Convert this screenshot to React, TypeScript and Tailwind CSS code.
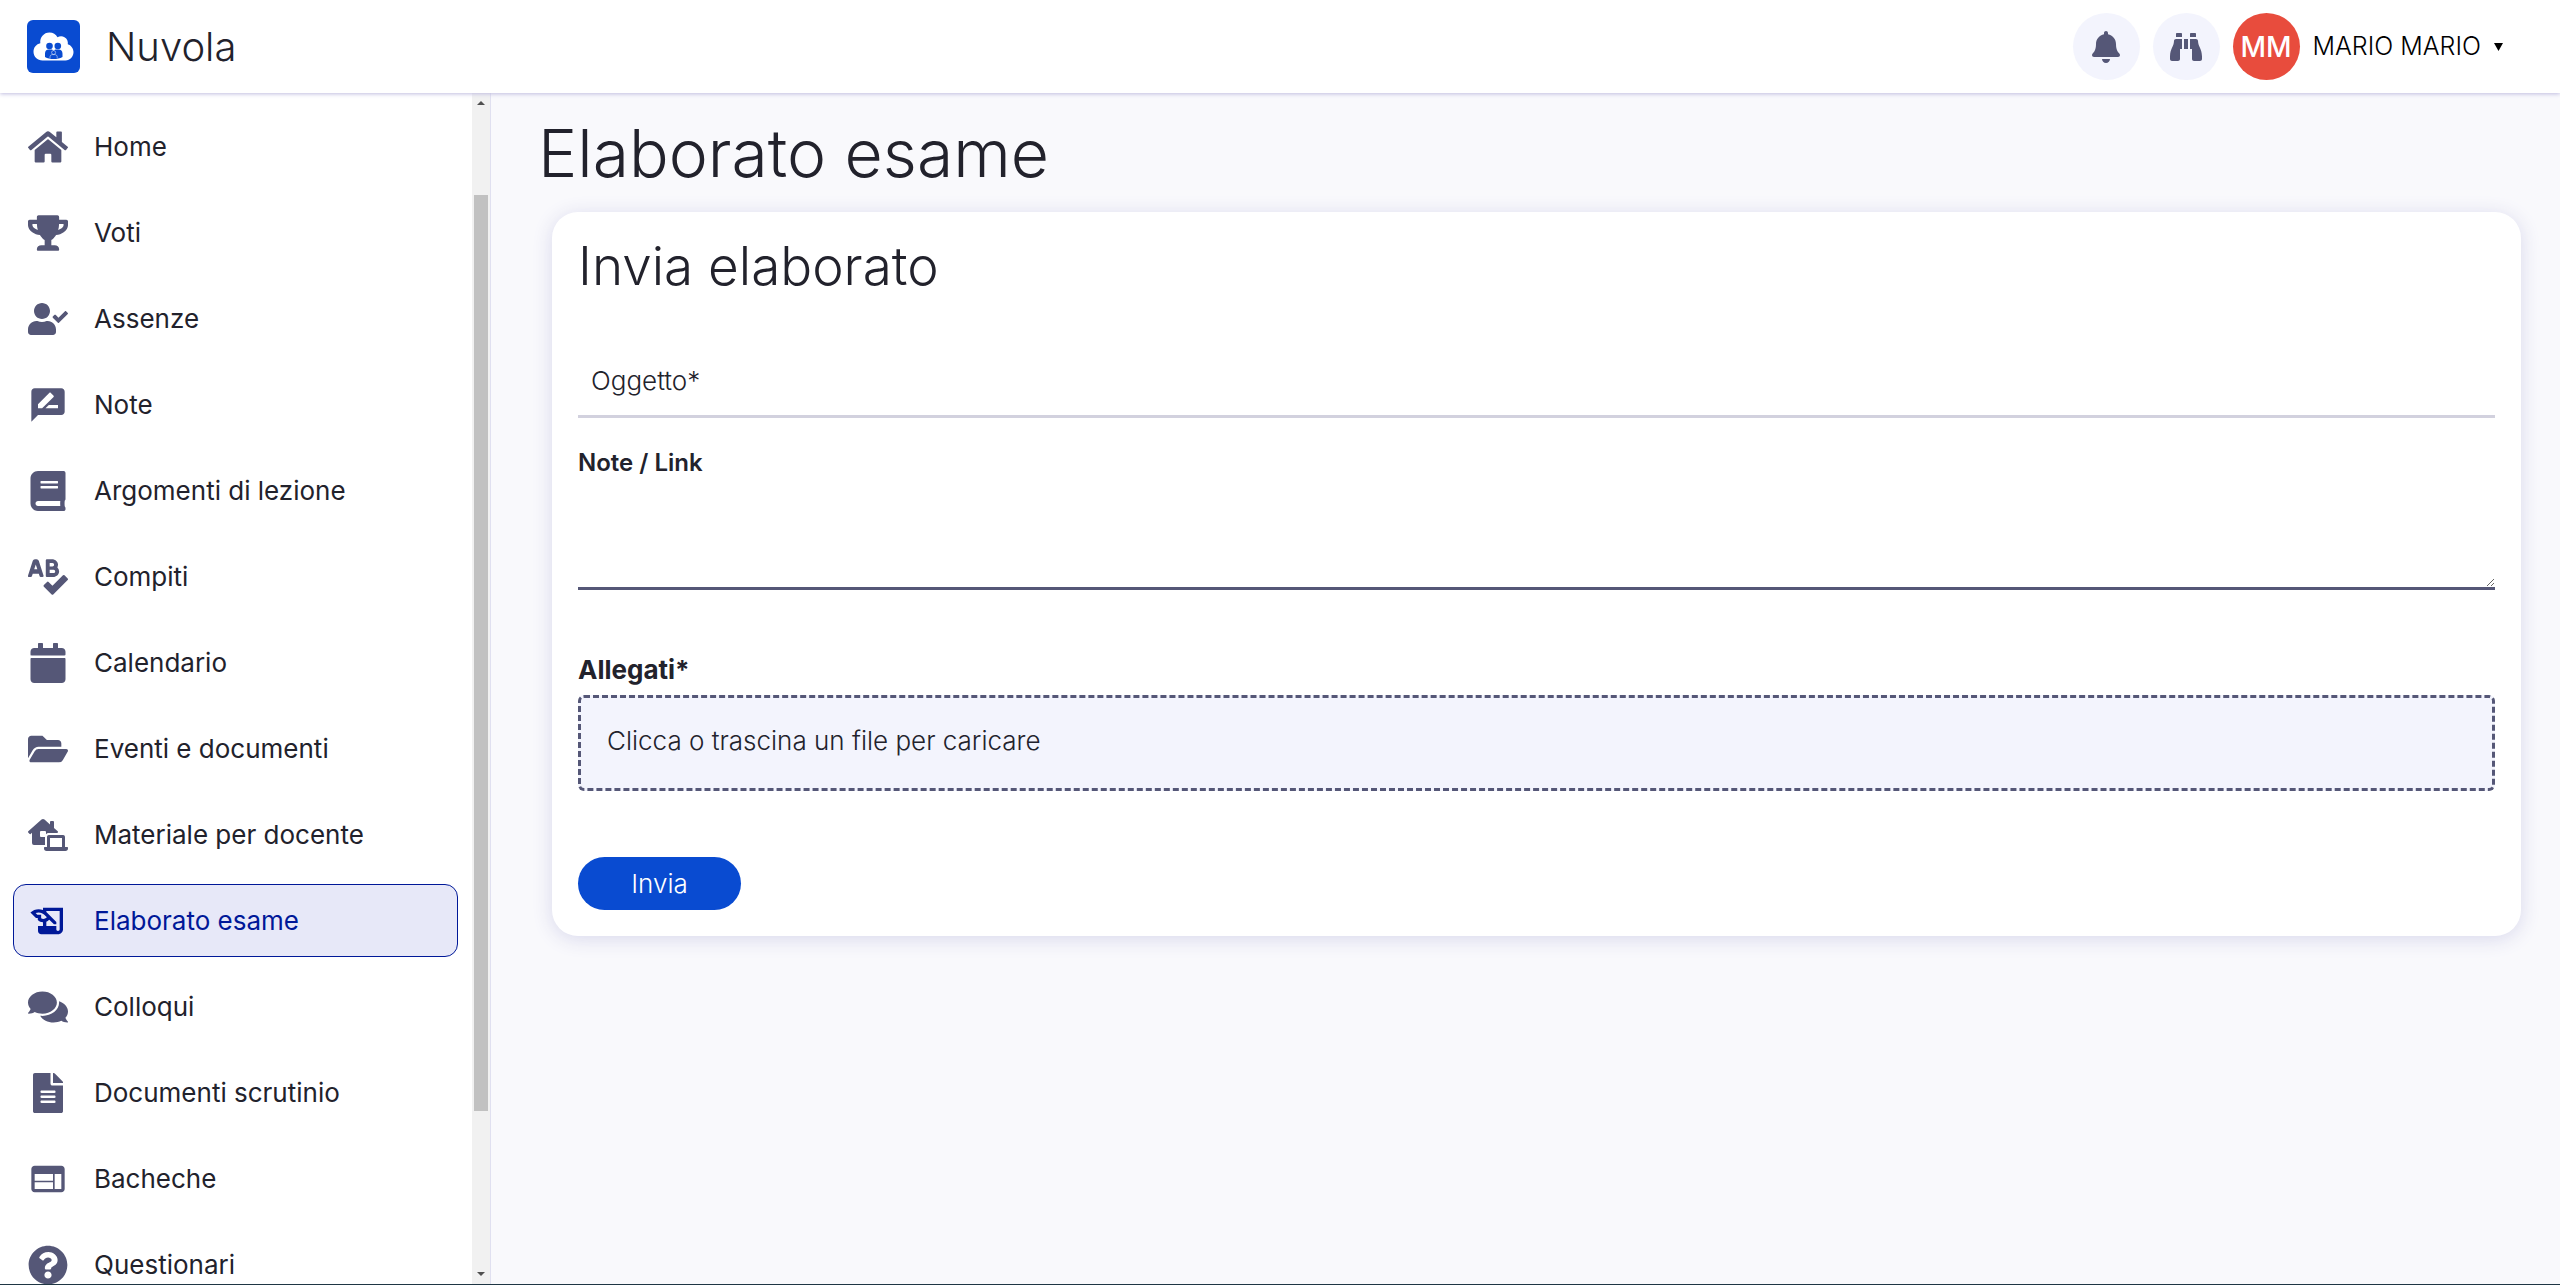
import React from "react";
import type { IconType } from "react-icons";
import {
  FaBell,
  FaBinoculars,
  FaBook,
  FaCalendar,
  FaComments,
  FaFileAlt,
  FaFolderOpen,
  FaHome,
  FaLaptopHouse,
  FaQuestionCircle,
  FaSpellCheck,
  FaTrophy,
  FaUserCheck,
} from "react-icons/fa";
import { MdHistoryEdu, MdRateReview, MdWeb } from "react-icons/md";

type MenuItem = { label: string; icon: IconType; active?: boolean };

const menu: MenuItem[] = [
  { label: "Home", icon: FaHome },
  { label: "Voti", icon: FaTrophy },
  { label: "Assenze", icon: FaUserCheck },
  { label: "Note", icon: MdRateReview },
  { label: "Argomenti di lezione", icon: FaBook },
  { label: "Compiti", icon: FaSpellCheck },
  { label: "Calendario", icon: FaCalendar },
  { label: "Eventi e documenti", icon: FaFolderOpen },
  { label: "Materiale per docente", icon: FaLaptopHouse },
  { label: "Elaborato esame", icon: MdHistoryEdu, active: true },
  { label: "Colloqui", icon: FaComments },
  { label: "Documenti scrutinio", icon: FaFileAlt },
  { label: "Bacheche", icon: MdWeb },
  { label: "Questionari", icon: FaQuestionCircle },
];

function Logo() {
  return (
    <svg viewBox="0 0 53 53" className="size-[53px]" aria-hidden="true">
      <rect width="53" height="53" rx="6" fill="#094bd1" />
      <path
        d="M15.5 40.5C10.500 40.500 6.500 36.500 6.500 31.700C6.500 27.300 9.400 24 13.300 23.200C12.700 17.500 16.700 12.500 22.500 12.500C26 12.500 28.900 14.300 30.500 17.200C32.500 16.100 35.300 15.900 37.500 17.200C40.200 18.700 41.200 21.300 40.800 24.200C44 25.200 46.500 28.300 46.500 32C46.500 36.800 43 40.500 38.500 40.500Z"
        fill="#fff"
      />
      <g fill="#094bd1">
        <circle cx="22.500" cy="26" r="3.300" />
        <circle cx="30.800" cy="26" r="3.300" />
        <path d="M18 37v-3.500c0-2.500 1.500-3.900 3.500-3.900h2.300c1.200 0 2.200.5 2.800 1.300.7-.8 1.700-1.300 2.900-1.300h2.300c2 0 3.700 1.400 3.700 3.900V37c-2.500 1.600-5.500 2-8.800 2s-6.200-.4-8.700-2Z" />
      </g>
      <circle cx="26.600" cy="32.500" r="2" fill="#094bd1" stroke="#fff" strokeWidth=".5" />
      <path
        d="M23 38.300v-1.500c0-1.300 1.200-2.200 2.500-2.200h2.200c1.400 0 2.500.9 2.500 2.200v1.500"
        fill="none"
        stroke="#fff"
        strokeWidth=".5"
      />
    </svg>
  );
}

function Header() {
  return (
    <header className="z-10 flex h-[93px] shrink-0 items-center justify-between bg-white pr-[57px] pl-[27px] shadow-[0_1px_4px_#bfbce0]">
      <div className="flex items-center gap-[26px]">
        <Logo />
        <span className="text-[40px] leading-[48px] font-light text-[#22222c]">Nuvola</span>
      </div>
      <div className="flex items-center gap-[13px]">
        <button
          aria-label="Notifiche"
          className="flex size-[67px] items-center justify-center rounded-full bg-[#f3f4fd] text-[#555777]"
        >
          <FaBell size={32} />
        </button>
        <button
          aria-label="Cerca"
          className="flex size-[67px] items-center justify-center rounded-full bg-[#f3f4fd] text-[#555777]"
        >
          <FaBinoculars size={32} />
        </button>
        <button className="flex items-center gap-[13px] text-black">
          <span className="flex size-[67px] items-center justify-center rounded-full bg-[#e84c3d] text-[28px] font-medium text-white">
            MM
          </span>
          <span className="text-[25px] font-light">MARIO MARIO</span>
          <svg viewBox="0 0 9 8" className="h-2 w-[9px]" aria-hidden="true">
            <path d="M0 0h9L4.500 8Z" fill="currentColor" />
          </svg>
        </button>
      </div>
    </header>
  );
}

function Scrollbar() {
  return (
    <div className="flex w-[18px] shrink-0 flex-col items-center bg-[#f1f1f1]" aria-hidden="true">
      <svg viewBox="0 0 18 18" className="size-[18px] shrink-0">
        <path d="M5 12h8L9 8Z" fill="#505050" />
      </svg>
      <div className="grow-[84]" />
      <div className="w-[14px] grow-[916] bg-[#c1c1c1]" />
      <div className="grow-[155]" />
      <svg viewBox="0 0 18 18" className="size-[18px] shrink-0">
        <path d="M5 6h8L9 10Z" fill="#505050" />
      </svg>
    </div>
  );
}

function Sidebar() {
  return (
    <aside className="flex w-[491px] shrink-0 border-r border-[#e0e0f0] bg-white">
      <nav className="flex flex-1 flex-col gap-[13px] overflow-hidden pt-[17px] pr-[14px] pl-[13px]">
        {menu.map(({ label, icon: Icon, active }) => (
          <a
            key={label}
            href="#"
            aria-current={active ? "page" : undefined}
            className={
              active
                ? "flex h-[73px] shrink-0 items-center gap-[26px] rounded-[13px] border border-[#001898] bg-[#e7e8f8] pl-[14px] text-[#001898]"
                : "flex h-[73px] shrink-0 items-center gap-[26px] border border-transparent pl-[14px] text-[#22222c]"
            }
          >
            <Icon size={40} className={active ? "text-[#001898]" : "text-[#555777]"} />
            <span className="text-[26px] leading-8">{label}</span>
          </a>
        ))}
      </nav>
      <Scrollbar />
    </aside>
  );
}

function UploadForm() {
  return (
    <form className="mr-[39px] ml-[61px] flex flex-col items-stretch rounded-[26px] bg-white px-[26px] pt-5 pb-[26px] shadow-[0_3px_20px_#d8d8ec]">
      <h2 className="text-[53px] leading-[68px] font-light">Invia elaborato</h2>

      <label className="mt-[46px] flex h-[72px] items-center gap-2 border-b-[3px] border-[#d2d1de] px-[13px] text-[26px] font-light">
        <span>Oggetto*</span>
        <input type="text" className="min-w-0 flex-1 outline-none" />
      </label>

      <label htmlFor="note" className="mt-[29px] text-2xl leading-8 font-semibold">
        Note / Link
      </label>
      <textarea
        id="note"
        className="h-[111px] w-full border-b-[3px] border-[#555777] px-[13px] text-[26px] font-light outline-none"
      />

      <span className="mt-[62px] text-[26px] leading-9 font-bold">Allegati*</span>
      <label className="mt-[7px] flex h-24 items-center rounded-[6px] border-[3px] border-dashed border-[#555777] bg-[#f3f4fd] px-[26px] pb-1.5 text-[26px] font-light">
        Clicca o trascina un file per caricare
        <input type="file" aria-label="Allegati" className="sr-only" />
      </label>

      <button
        type="button"
        className="mt-[66px] h-[53px] w-[163px] rounded-full bg-[#094bd1] text-[26px] font-light text-white"
      >
        Invia
      </button>
    </form>
  );
}

export default function App() {
  return (
    <div className="flex h-screen flex-col overflow-hidden border-b border-[#1f3644] bg-[#f9f9fc] font-['Inter','Noto_Sans',sans-serif] text-[#22222c]">
      <Header />
      <div className="flex min-h-0 flex-1">
        <Sidebar />
        <main className="min-w-0 flex-1">
          <h1 className="pt-5 pb-[19px] pl-[47px] text-[66px] leading-[80px] font-light">
            Elaborato esame
          </h1>
          <UploadForm />
        </main>
      </div>
    </div>
  );
}
